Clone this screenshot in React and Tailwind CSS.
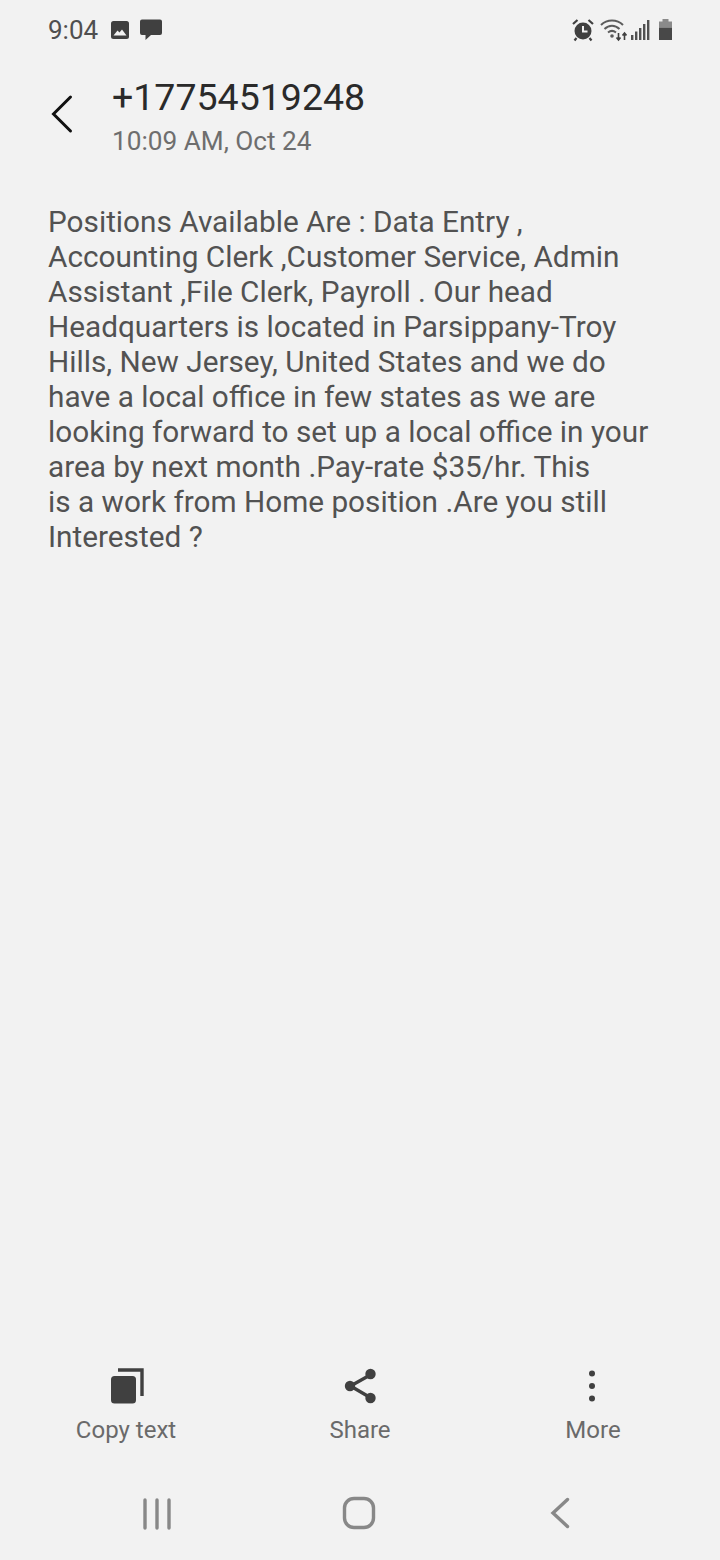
import React from 'react'

const BODY_LINES = [
  'Positions Available Are : Data Entry ,',
  'Accounting Clerk ,Customer Service, Admin',
  'Assistant ,File Clerk, Payroll . Our head',
  'Headquarters is located in Parsippany-Troy',
  'Hills, New Jersey, United States and we do',
  'have a local office in few states as we are',
  'looking forward to set up a local office in your',
  'area by next month .Pay-rate $35/hr. This',
  'is a work from Home position .Are you still',
  'Interested ?',
]

function StatusBar() {
  return (
    <div className="flex h-[60px] items-center justify-between pl-[48px] pr-[48px]">
      <div className="flex items-center">
        <span className="text-[26px] leading-none text-[#4f4f4f]">9:04</span>
        {/* picture notification */}
        <svg className="ml-[12px]" width="20" height="20" viewBox="0 0 20 20">
          <rect x="1" y="1" width="18" height="18" rx="2.5" fill="#404040" />
          <path d="M3.5 15.5 L7.5 10.5 L9.5 12.5 L12 9.5 L16.5 15.5 Z" fill="#f2f2f2" />
        </svg>
        {/* message notification */}
        <svg className="ml-[9px]" width="24" height="24" viewBox="0 0 24 24">
          <path d="M3 1.5 H21 a2 2 0 0 1 2 2 V15 a2 2 0 0 1 -2 2 H12 L6.5 22 V17 H3 a2 2 0 0 1 -2 -2 V3.5 a2 2 0 0 1 2 -2 Z" fill="#404040" />
        </svg>
      </div>
      <div className="flex items-center">
        {/* alarm */}
        <svg width="24" height="24" viewBox="0 0 24 24">
          <circle cx="12" cy="13" r="8.5" fill="#404040" />
          <path d="M12 8 V13.5 H16.5" stroke="#f2f2f2" strokeWidth="2" fill="none" />
          <path d="M2 6 L6.5 2 M22 6 L17.5 2 M5.5 20 L3.5 22.5 M18.5 20 L20.5 22.5" stroke="#404040" strokeWidth="2.2" fill="none" />
        </svg>
        {/* wifi with arrows */}
        <svg className="ml-[5px]" width="27" height="24" viewBox="0 0 27 24">
          <path d="M1 7 C7 1 17 1 23 7" stroke="#5c5c5c" strokeWidth="2" fill="none" />
          <path d="M4.5 11 C9 6.5 15 6.5 19.5 11" stroke="#5c5c5c" strokeWidth="2" fill="none" />
          <path d="M8 14.5 C10.5 12.5 13.5 12.5 16 14.5" stroke="#5c5c5c" strokeWidth="2" fill="none" />
          <circle cx="12" cy="18" r="1.8" fill="#5c5c5c" />
          <path d="M18.5 15 V22 M16.5 19.5 L18.5 22 L20.5 19.5" stroke="#404040" strokeWidth="1.6" fill="none" />
          <path d="M24.5 22 V15 M22.5 17.5 L24.5 15 L26.5 17.5" stroke="#404040" strokeWidth="1.6" fill="none" />
        </svg>
        {/* signal bars */}
        <svg className="ml-[4px]" width="19" height="22" viewBox="0 0 19 22">
          <rect x="0" y="16" width="2.4" height="5" fill="#505050" />
          <rect x="4" y="12.5" width="2.4" height="8.5" fill="#505050" />
          <rect x="8" y="9" width="2.4" height="12" fill="#505050" />
          <rect x="12" y="5" width="2.4" height="16" fill="#505050" />
          <rect x="16" y="1" width="2.4" height="20" fill="#505050" />
        </svg>
        {/* battery */}
        <svg className="ml-[9px]" width="13" height="22" viewBox="0 0 13 22">
          <rect x="3.5" y="0" width="6" height="3" fill="#8a8a8a" />
          <rect x="0" y="2.5" width="13" height="6" fill="#8a8a8a" />
          <rect x="0" y="8.5" width="13" height="12.5" fill="#484848" />
        </svg>
      </div>
    </div>
  )
}

function ActionItem({ label, children }) {
  return (
    <div className="flex w-[234px] flex-col items-center">
      <div className="flex h-[44px] items-center justify-center">{children}</div>
      <span className="mt-[7px] text-[24px] leading-[30px] text-[#6a6a6a]">{label}</span>
    </div>
  )
}

export default function App() {
  return (
    <div className="flex h-[1560px] w-[720px] flex-col overflow-hidden bg-[#f2f2f2] font-['Roboto',sans-serif]">
      <StatusBar />

      {/* Header */}
      <div className="flex pl-[50px] pt-[15px]">
        <svg className="mt-[19px]" width="25" height="40" viewBox="0 0 25 40">
          <path d="M20.5 3 L3.5 20 L20.5 37" stroke="#111111" strokeWidth="3" strokeLinecap="round" fill="none" />
        </svg>
        <div className="ml-[37px]">
          <div className="text-[37.5px] leading-[45px] text-[#2a2a2a]">+17754519248</div>
          <div className="mt-[3px] text-[26.2px] leading-[37px] text-[#6e6e6e]">10:09 AM, Oct 24</div>
        </div>
      </div>

      {/* Message */}
      <div className="pl-[48px] pt-[44px] text-[29.75px] leading-[35px] text-[#525252]">
        {BODY_LINES.map((line) => (
          <div key={line} className="whitespace-nowrap">{line}</div>
        ))}
      </div>

      <div className="flex-1" />

      {/* Actions */}
      <div className="flex pl-[9px] pr-[10px]">
        <ActionItem label="Copy text">
          <svg className="ml-[2px]" width="34" height="36" viewBox="0 0 34 36">
            <path d="M8 2 H32 V28" stroke="#404040" strokeWidth="3.4" fill="none" />
            <rect x="1" y="8" width="25" height="27.5" rx="3.5" fill="#404040" />
          </svg>
        </ActionItem>
        <ActionItem label="Share">
          <svg className="ml-[2px]" width="34" height="36" viewBox="0 0 34 36">
            <path d="M27 6.5 L6.5 18 L27 30" stroke="#404040" strokeWidth="3.4" fill="none" />
            <circle cx="6" cy="18" r="5.2" fill="#404040" />
            <circle cx="26.5" cy="6" r="5.2" fill="#404040" />
            <circle cx="26.5" cy="30" r="5.2" fill="#404040" />
          </svg>
        </ActionItem>
        <div className="-ml-[1px]">
          <ActionItem label="More">
            <svg className="-ml-[2px]" width="10" height="36" viewBox="0 0 10 36">
              <circle cx="5" cy="5.5" r="3" fill="#404040" />
              <circle cx="5" cy="18" r="3" fill="#404040" />
              <circle cx="5" cy="30.5" r="3" fill="#404040" />
            </svg>
          </ActionItem>
        </div>
      </div>

      {/* Navigation bar */}
      <div className="mt-[38px] flex h-[77px] items-start pl-[57px]">
        <div className="flex w-[201px] justify-center pt-[15px]">
          <svg width="32" height="32" viewBox="0 0 32 32">
            <path d="M3 2 V30 M15 2 V30 M27 2 V30" stroke="#888888" strokeWidth="3.4" strokeLinecap="round" fill="none" />
          </svg>
        </div>
        <div className="flex w-[201px] justify-center pt-[13px]">
          <svg width="34" height="34" viewBox="0 0 34 34">
            <rect x="2.5" y="2.5" width="29" height="29" rx="9.5" stroke="#888888" strokeWidth="3.4" fill="none" />
          </svg>
        </div>
        <div className="flex w-[201px] justify-center pt-[14px]">
          <svg width="20" height="32" viewBox="0 0 20 32">
            <path d="M17.5 2.5 L3 16 L17.5 29.5" stroke="#888888" strokeWidth="3.4" strokeLinecap="round" fill="none" />
          </svg>
        </div>
      </div>
    </div>
  )
}
